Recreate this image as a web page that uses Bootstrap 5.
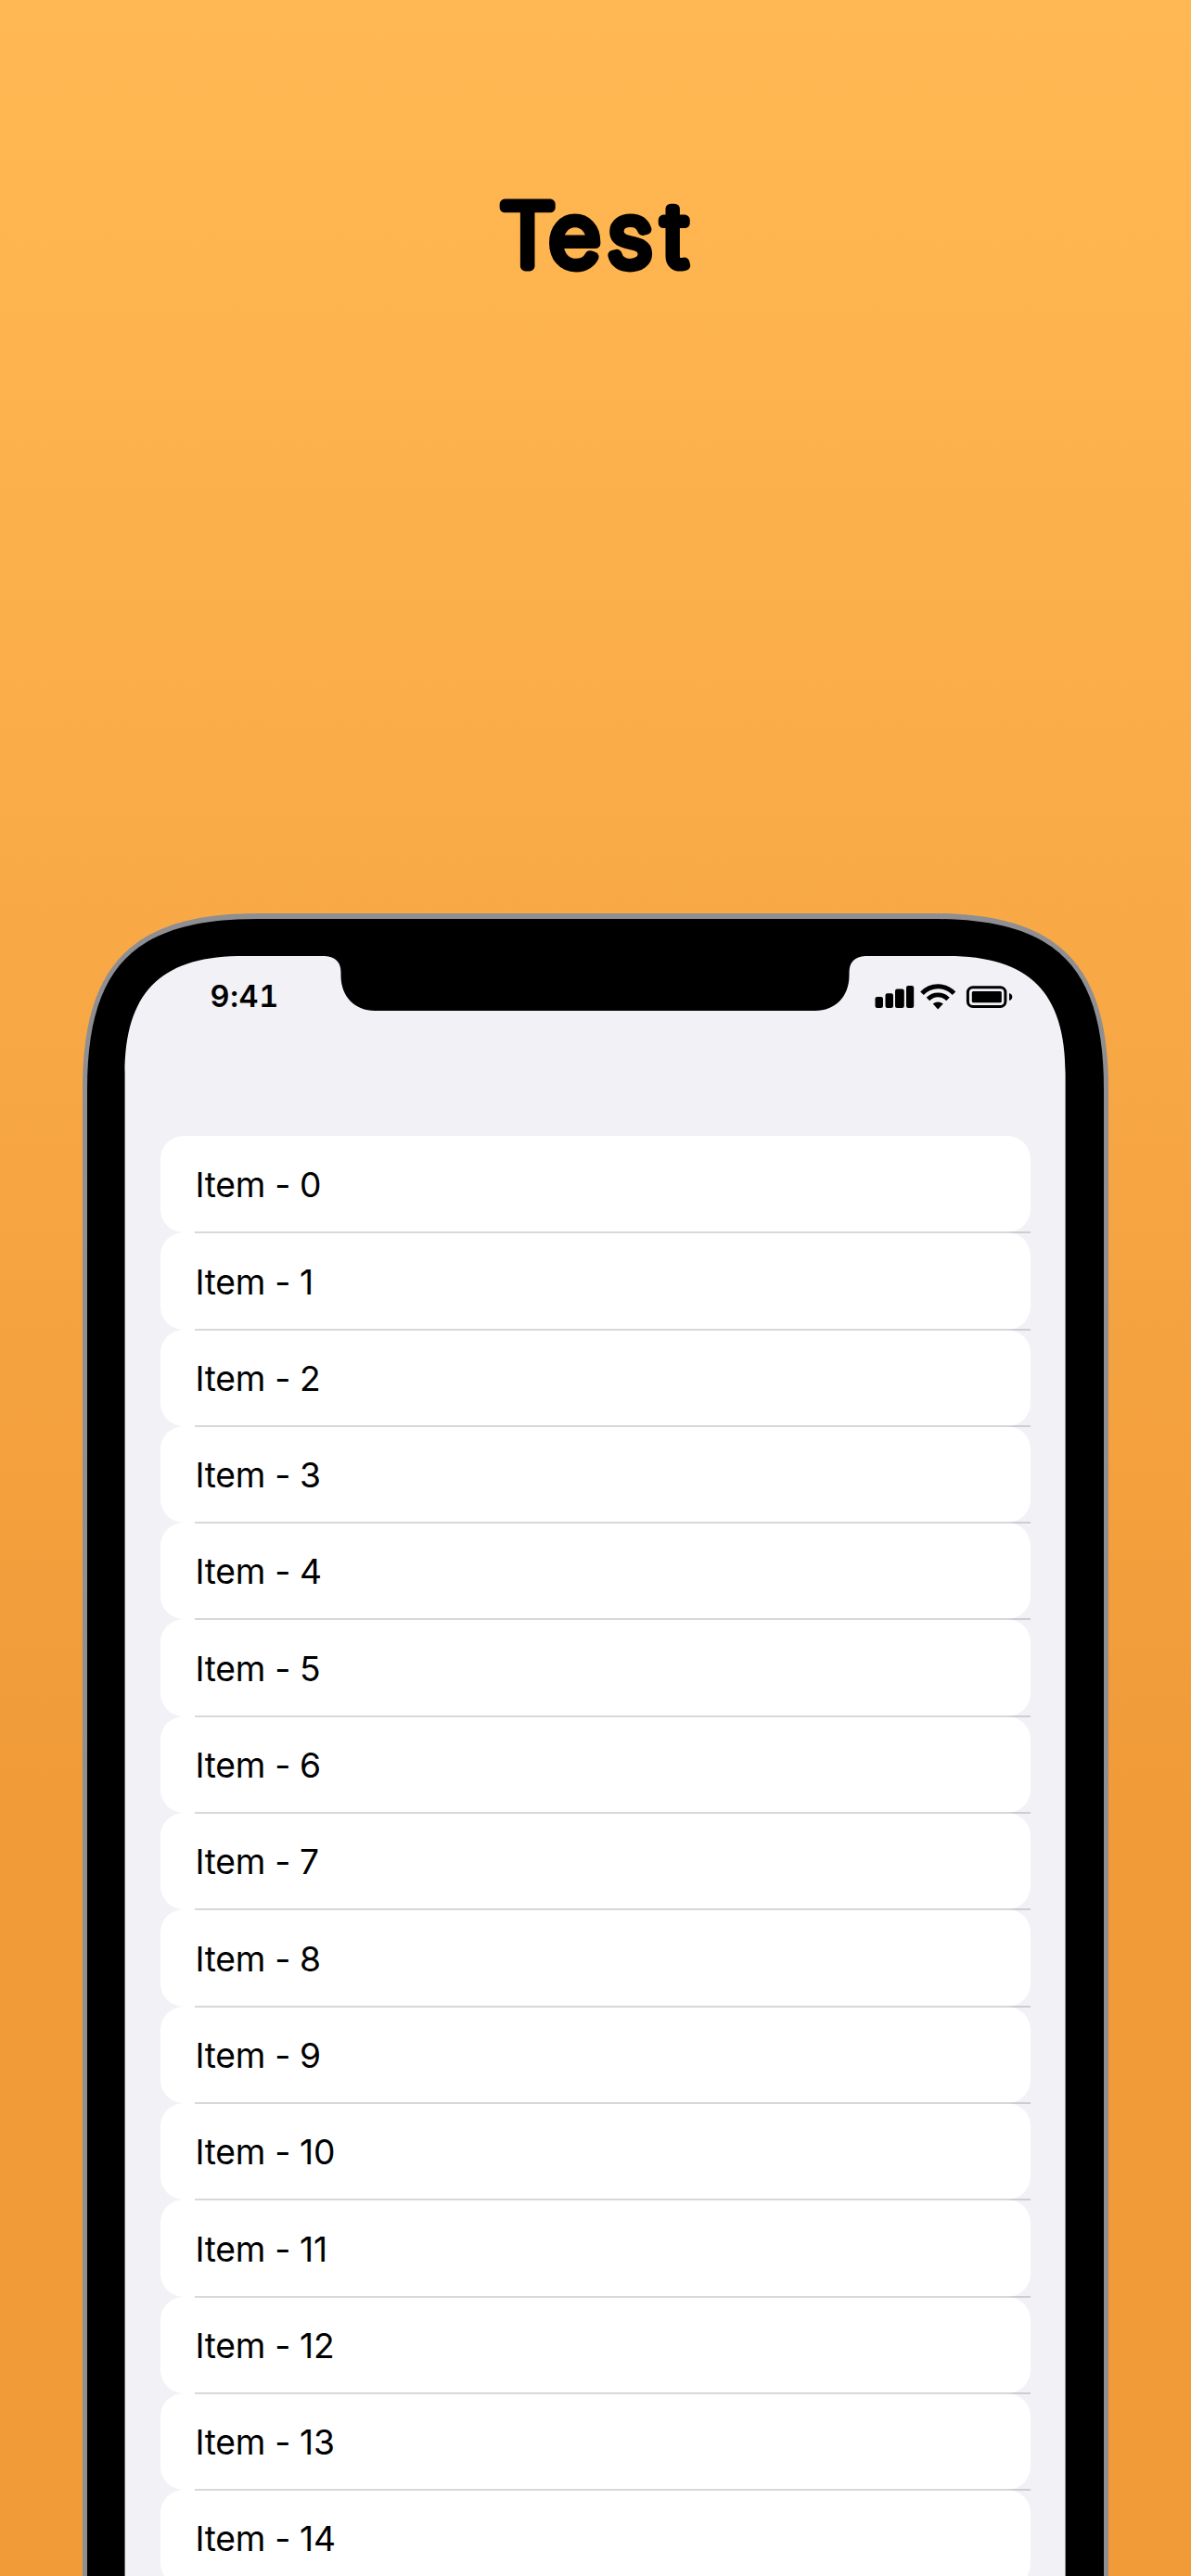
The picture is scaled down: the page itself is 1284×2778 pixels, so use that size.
<!DOCTYPE html>
<html lang="en">
<head>
<meta charset="utf-8">
<meta name="viewport" content="width=device-width, initial-scale=1">
<title>Test</title>
<link rel="stylesheet" href="https://cdn.jsdelivr.net/npm/bootstrap@5.3.0/dist/css/bootstrap.min.css">
<style>
  body { font-family: Inter, "Liberation Sans", sans-serif; color: #000; }
  .poster { width: 1284px; height: 2778px; background: linear-gradient(180deg, #ffb854 0, #ffb651 180px, #f09a38 1980px, #f09a38 100%); }
  .headline { height: 985px; }
  .headline svg { width: 1284px; height: 400px; }
  .device { width: 1106px; height: 1793px; margin-left: 89px; }
  .shell { left: 0; top: 0; z-index: 0; }
  .screen { z-index: 1; padding: 46px 46.4px 0 45.6px; }
  .status { height: 194px; padding: 28px 56px 0 92px; }
  .clock { font-size: 32.5px; line-height: 31px; font-weight: 600; letter-spacing: .6px; font-variant-numeric: tabular-nums; }
  .items { margin: 0 38px; }
  .items .list-group-item { height: 104.31px; border: 0; border-radius: 25px; padding: 2px 0 0 38px; font-size: 37.2px; color: #000; background: #fff; letter-spacing: -.3px; }
  .items .list-group-item::after { content: ""; position: absolute; left: 37.500px; right: 0; bottom: -1px; height: 2px; background: rgba(60,60,67,.2); z-index: 2; }
</style>
</head>
<body>
<main class="poster d-flex flex-column overflow-hidden">
  <header class="headline flex-shrink-0">
    <h1 class="m-0"><svg class="d-block" viewBox="0 0 1284 400" role="img">
      <text transform="scale(1.04 1)" x="518.1 569.2 629.8 687.2" y="287.5" font-family="Inter" font-weight="200" font-size="92" stroke="#000" stroke-width="10.800" stroke-linejoin="round">Test</text>
    </svg></h1>
  </header>
  <section class="device position-relative flex-shrink-0">
    <svg class="shell position-absolute" width="1106" height="1793" viewBox="89 985 1106 1793">
      <path fill="#8e8e93" d="M89 2790V1175C89 1039 143 985 279 985H1005C1141 985 1195 1039 1195 1175V2790Z"/>
      <path fill="#000" d="M94 2790V1175C94 1042 145 991 278 991H1006C1139 991 1190 1042 1190 1175V2790Z"/>
      <path fill="#f2f1f6" d="M134.600 2790V1158C134.600 1070 173.600 1031 261.600 1031H350Q367.500 1032 367.500 1049V1052C367.500 1075 383 1090 404 1090H879C900 1090 915.500 1075 915.500 1052V1049Q915.500 1032 933 1031H1021.600C1109.600 1031 1148.600 1070 1148.600 1158V2790Z"/>
    </svg>
    <div class="screen position-relative">
      <div class="status d-flex justify-content-between align-items-start">
        <span class="clock">9:41</span>
        <svg width="150" height="32" viewBox="943 1059 150 32">
          <rect x="943.500" y="1075" width="8.500" height="12" rx="2.200"/>
          <rect x="954.500" y="1071.300" width="8.500" height="15.700" rx="2.200"/>
          <rect x="965" y="1066.500" width="9.800" height="20.500" rx="2.200"/>
          <rect x="977" y="1063" width="8.200" height="24" rx="2.200"/>
          <g fill="none" stroke="#000" stroke-width="4.900">
            <path d="M994 1071.300C1003.500 1061.300 1019 1061.300 1028.500 1071.300"/>
            <path d="M1000.500 1077.500C1006.500 1071.300 1016 1071.300 1022 1077.500"/>
          </g>
          <path d="M1005.700 1082.500Q1011.200 1078.500 1016.800 1082.500L1011.200 1088.500Z"/>
          <rect x="1043.400" y="1064.700" width="40.500" height="20.800" rx="5.500" fill="none" stroke="#000" stroke-width="3"/>
          <rect x="1047.800" y="1069" width="32" height="12.200" rx="1.500"/>
          <path d="M1088 1071Q1091.300 1072 1091.300 1075T1088 1079Z"/>
        </svg>
      </div>
      <ul class="list-group items">
        <li class="list-group-item d-flex align-items-center">Item - 0</li>
        <li class="list-group-item d-flex align-items-center">Item - 1</li>
        <li class="list-group-item d-flex align-items-center">Item - 2</li>
        <li class="list-group-item d-flex align-items-center">Item - 3</li>
        <li class="list-group-item d-flex align-items-center">Item - 4</li>
        <li class="list-group-item d-flex align-items-center">Item - 5</li>
        <li class="list-group-item d-flex align-items-center">Item - 6</li>
        <li class="list-group-item d-flex align-items-center">Item - 7</li>
        <li class="list-group-item d-flex align-items-center">Item - 8</li>
        <li class="list-group-item d-flex align-items-center">Item - 9</li>
        <li class="list-group-item d-flex align-items-center">Item - 10</li>
        <li class="list-group-item d-flex align-items-center">Item - 11</li>
        <li class="list-group-item d-flex align-items-center">Item - 12</li>
        <li class="list-group-item d-flex align-items-center">Item - 13</li>
        <li class="list-group-item d-flex align-items-center">Item - 14</li>
      </ul>
    </div>
  </section>
</main>
<script src="https://cdn.jsdelivr.net/npm/bootstrap@5.3.0/dist/js/bootstrap.bundle.min.js"></script>
</body>
</html>
